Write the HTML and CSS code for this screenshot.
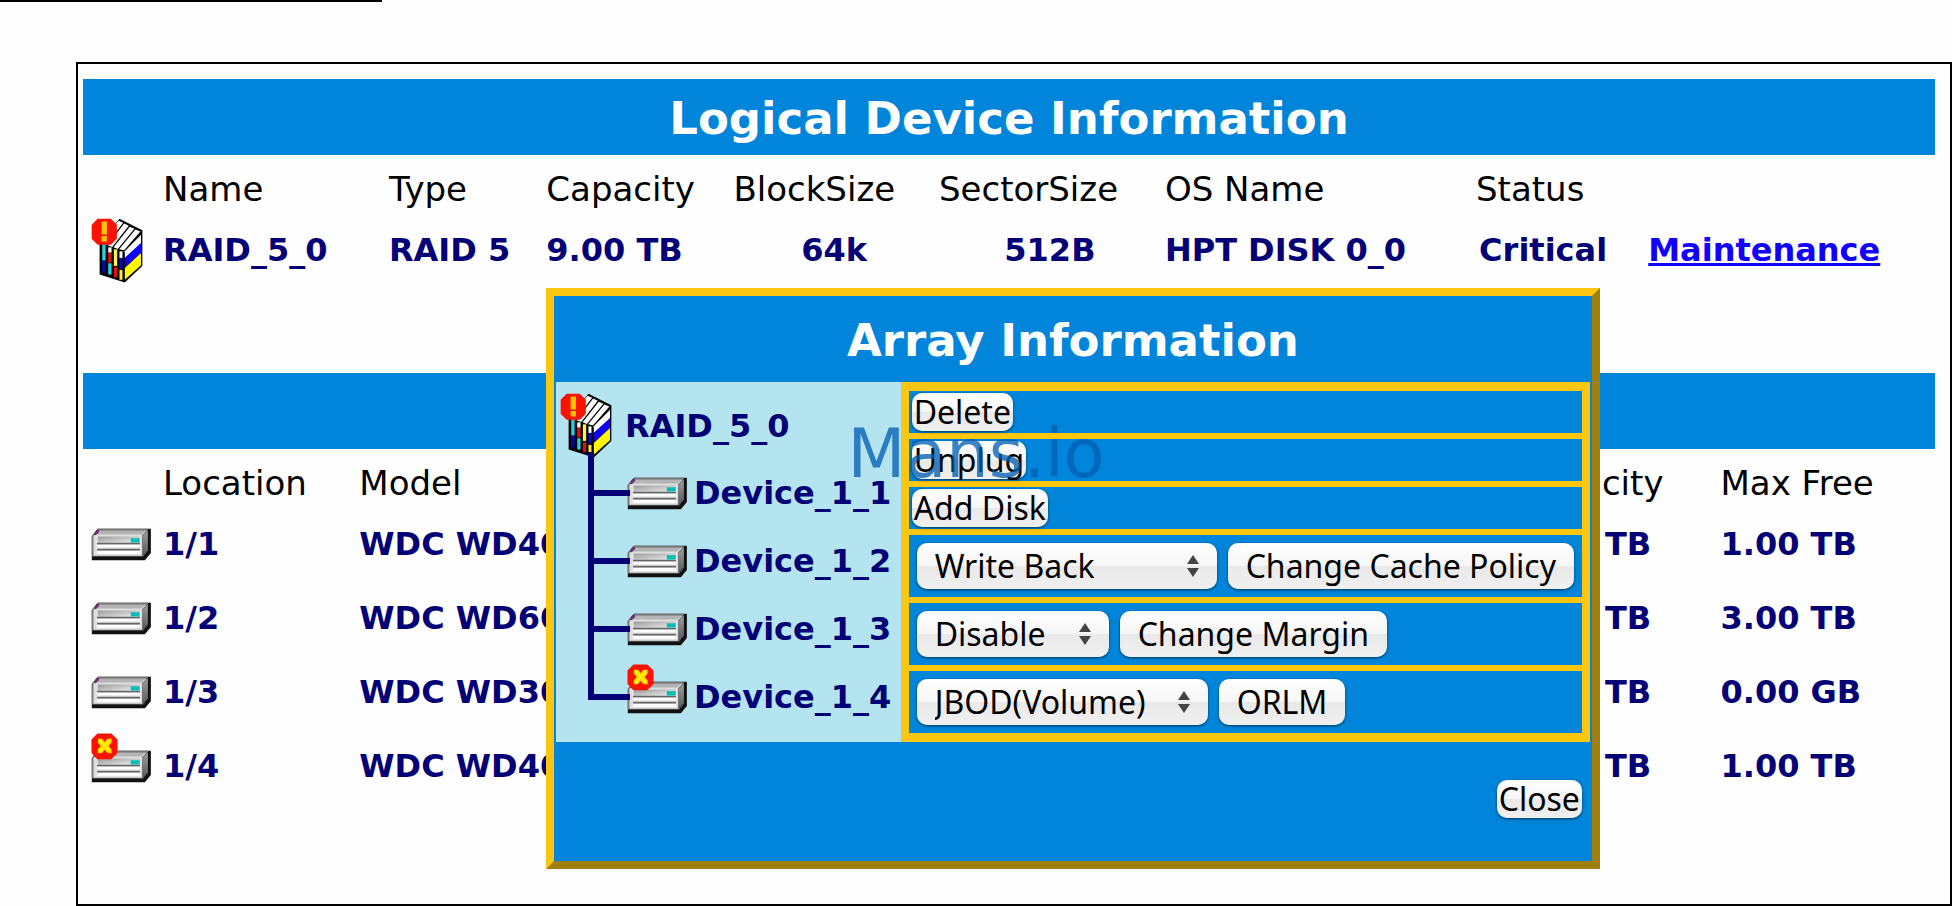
FILE: index.html
```html
<!DOCTYPE html>
<html lang="en">
<head>
<meta charset="utf-8">
<title>Logical Device Information</title>
<link rel="stylesheet" href="styles.css">
</head>
<body>
<svg class="defs" aria-hidden="true">
  <defs>
    <linearGradient id="metal" x1="0" y1="0" x2="1" y2="1">
      <stop offset="0" stop-color="#9a9a9a"/>
      <stop offset="1" stop-color="#f4f4f4"/>
    </linearGradient>
    <linearGradient id="side" x1="0" y1="0" x2="0" y2="1">
      <stop offset="0" stop-color="#a0a0a0"/>
      <stop offset="1" stop-color="#555"/>
    </linearGradient>
  </defs>
  <symbol id="disk" viewBox="32 88 184 100" overflow="visible">
    <path d="M34 112L52 90H213V164L195 186H34Z" fill="#111"/>
    <path d="M34 112L52 90H206L190 112V174H34Z" fill="#777"/>
    <path d="M39 112L54 96H200L186 110V172H39Z" fill="#dedede"/>
    <path d="M188 112L204 95V156L188 176Z" fill="url(#side)"/>
    <path d="M54 97H196L184 108H44Z" fill="#b4b4b4"/>
    <path d="M48 112H184V170H48Z" fill="#e4e4e4"/>
    <path d="M52 114H180V134H52Z" fill="url(#metal)"/>
    <path d="M50 133H180V138H50ZM50 151H180V156H50Z" fill="#666"/>
    <path d="M50 139H180V146H50ZM50 158H180V166H50Z" fill="#fff"/>
    <path d="M152 119H179V132H152Z" fill="#08bdb8"/>
    <path d="M40 108L48 94H56V100L46 110Z" fill="#6b2f6b"/>
  </symbol>
  <symbol id="disk-failed" viewBox="32 88 184 100" overflow="visible">
    <use href="#disk" x="32" y="88" width="184" height="100"/>
    <path d="M51 38H93L112 56V97L93 116H51L33 97V56Z" fill="#fb1200"/>
    <path d="M53 54H65L73 64L81 54H94V66L85 76L94 86V98H82L73 88L64 98H52V86L61 76L52 66Z" fill="#ffd800"/>
    <path d="M57 58L89 94M89 58L57 94" stroke="#fff200" stroke-width="6"/>
  </symbol>
  <symbol id="raid" viewBox="32 22 160 195">
    <path d="M58 96L118 24L187 58V166L134 216L58 192Z" fill="#000"/>
    <path d="M62 97L115 30L129 36L78 103ZM82 104L132 38L146 45L96 109ZM100 110L149 48L163 54L113 115ZM117 116L166 56L181 62L132 119Z" fill="#fff"/>
    <path d="M134 122L183 72V98L134 142Z" fill="#fff"/>
    <path d="M134 142L183 97V126L134 170Z" fill="#1000fa"/>
    <path d="M134 172L183 127V164L134 208Z" fill="#fff600"/>
    <path d="M66 100H76V150H66Z" fill="#25d5df"/>
    <path d="M66 150H76V186H66Z" fill="#0808a8"/>
    <path d="M84 110H94V126H84Z" fill="#fff"/>
    <path d="M84 126H94V156H84Z" fill="#e01010"/>
    <path d="M84 158H94V192H84Z" fill="#25d5df"/>
    <path d="M101 116H111V166H101Z" fill="#fff04a"/>
    <path d="M101 170H111V200H101Z" fill="#e01010"/>
    <path d="M118 122H127V142H118Z" fill="#fff"/>
    <path d="M118 142H127V174H118Z" fill="#0808c0"/>
    <path d="M118 178H127V208H118Z" fill="#ffe83a"/>
    <path d="M52 24H92L110 42V84L92 102H52L34 84V42Z" fill="#fb1200"/>
    <path d="M64 32H80V71H64ZM64 76H80V92H64Z" fill="#ffc400"/>
  </symbol>
  <symbol id="updown" viewBox="0 0 14 24">
    <path d="M7 1L13 10H1ZM7 23L13 14H1Z" fill="#444"/>
  </symbol>
</svg>

<div class="rule"></div>

<main class="frame">
  <section class="devices">
    <h1 class="bar">Logical Device Information</h1>
    <table class="grid logical">
      <colgroup>
        <col class="c-icon"><col class="c-name"><col class="c-type"><col class="c-cap"><col class="c-block"><col class="c-sector"><col class="c-os"><col class="c-status"><col>
      </colgroup>
      <thead>
        <tr><th></th><th>Name</th><th>Type</th><th>Capacity</th><th>BlockSize</th><th>SectorSize</th><th>OS Name</th><th>Status</th><th></th></tr>
      </thead>
      <tbody>
        <tr>
          <td class="icon-cell"><svg class="icon-raid"><use href="#raid"/></svg></td>
          <td>RAID_5_0</td><td>RAID 5</td><td>9.00 TB</td>
          <td class="mid">64k</td><td class="mid">512B</td><td>HPT DISK 0_0</td><td class="mid state">Critical</td>
          <td><a href="#array">Maintenance</a></td>
        </tr>
      </tbody>
    </table>
  </section>

  <section class="devices">
    <div class="bar"></div>
    <table class="grid physical">
      <colgroup>
        <col class="c-icon"><col class="c-loc"><col class="c-model"><col class="c-size"><col>
      </colgroup>
      <thead>
        <tr><th></th><th>Location</th><th>Model</th><th>Capacity</th><th>Max Free</th></tr>
      </thead>
      <tbody>
        <tr><td class="icon-cell"><svg class="icon-disk"><use href="#disk"/></svg></td><td>1/1</td><td>WDC WD40</td><td>4.00 TB</td><td>1.00 TB</td></tr>
        <tr><td class="icon-cell"><svg class="icon-disk"><use href="#disk"/></svg></td><td>1/2</td><td>WDC WD60</td><td>6.00 TB</td><td>3.00 TB</td></tr>
        <tr><td class="icon-cell"><svg class="icon-disk"><use href="#disk"/></svg></td><td>1/3</td><td>WDC WD30</td><td>3.00 TB</td><td>0.00 GB</td></tr>
        <tr><td class="icon-cell"><svg class="icon-disk"><use href="#disk-failed"/></svg></td><td>1/4</td><td>WDC WD40</td><td>4.00 TB</td><td>1.00 TB</td></tr>
      </tbody>
    </table>
  </section>

  <section class="dialog" id="array" role="dialog" aria-labelledby="array-title">
    <h2 class="dialog-title" id="array-title">Array Information</h2>
    <div class="dialog-body">
      <div class="tree">
        <div class="tree-root"><svg class="icon-raid"><use href="#raid"/></svg><span>RAID_5_0</span></div>
        <ul class="tree-list">
          <li><svg class="icon-disk"><use href="#disk"/></svg><span>Device_1_1</span></li>
          <li><svg class="icon-disk"><use href="#disk"/></svg><span>Device_1_2</span></li>
          <li><svg class="icon-disk"><use href="#disk"/></svg><span>Device_1_3</span></li>
          <li><svg class="icon-disk"><use href="#disk-failed"/></svg><span>Device_1_4</span></li>
        </ul>
      </div>
      <div class="actions">
        <div class="action slim"><button type="button" class="btn small">Delete</button></div>
        <div class="action slim"><button type="button" class="btn small">Unplug</button></div>
        <div class="action slim"><button type="button" class="btn small">Add Disk</button></div>
        <div class="action">
          <span class="pick pick-cache"><select class="btn" aria-label="Cache policy"><option>Write Back</option></select><svg class="arrows"><use href="#updown"/></svg></span>
          <button type="button" class="btn">Change Cache Policy</button>
        </div>
        <div class="action">
          <span class="pick pick-margin"><select class="btn" aria-label="Margin"><option>Disable</option></select><svg class="arrows"><use href="#updown"/></svg></span>
          <button type="button" class="btn">Change Margin</button>
        </div>
        <div class="action">
          <span class="pick pick-level"><select class="btn" aria-label="Array level"><option>JBOD(Volume)</option></select><svg class="arrows"><use href="#updown"/></svg></span>
          <button type="button" class="btn">ORLM</button>
        </div>
      </div>
    </div>
    <div class="dialog-foot"><button type="button" class="btn small">Close</button></div>
  </section>
</main>

<div class="watermark">Mans.io</div>
</body>
</html>
```

FILE: styles.css
```css
* { box-sizing: border-box; }

body {
  position: relative;
  margin: 0;
  min-height: 100vh;
  display: flex;
  flex-direction: column;
  background: #fefefe;
  color: #000;
  font-family: Verdana, "DejaVu Sans", sans-serif;
}

.defs {
  position: absolute;
  width: 0;
  height: 0;
}

.rule {
  width: 382px;
  height: 2px;
  margin-bottom: 60px;
  background: #000;
}

.frame {
  position: relative;
  flex: 1;
  margin-left: 76px;
  padding: 15px 15px 0 5px;
  border: 2px solid #000;
}

.devices + .devices { margin-top: 88px; }

.bar {
  display: flex;
  align-items: center;
  justify-content: center;
  height: 76px;
  margin: 0;
  padding-top: 3px;
  background: #0085da;
  color: #fff;
  font-size: 45px;
  font-weight: bold;
}

.grid {
  width: 100%;
  table-layout: fixed;
  border-collapse: collapse;
  white-space: nowrap;
}

.grid th {
  height: 58px;
  padding: 10px 0 0;
  font-size: 34px;
  line-height: 40px;
  font-weight: normal;
  text-align: left;
}

.grid td {
  height: 74px;
  padding: 0;
  color: #050075;
  font-size: 32px;
  line-height: 40px;
  font-weight: bold;
}

.grid .mid {
  padding-right: 4px;
  text-align: center;
}

.grid .state { padding-right: 38px; }

.grid .icon-cell { padding-left: 8px; }

.grid a { color: #1200ff; }

.devices + .devices { margin-top: 86px; }

.c-icon { width: 80px; }
.c-name { width: 12.2%; }
.c-type { width: 8.5%; }
.c-cap { width: 10.1%; }
.c-block { width: 11.1%; }
.c-sector { width: 12.2%; }
.c-os { width: 16.8%; }
.c-status { width: 9.3%; }
.c-loc { width: 10.6%; }
.c-model { width: 62.4%; }
.c-size { width: 11.1%; }

.icon-raid {
  display: block;
  flex: none;
  width: 53px;
  height: 65px;
}

.icon-disk {
  display: block;
  flex: none;
  width: 61px;
  height: 33px;
  overflow: visible;
}

.dialog {
  position: absolute;
  top: 224px;
  left: 25%;
  width: 56.3%;
  border: 8px solid;
  border-color: #fac60f #a07f0c #a07f0c #fac60f;
  background: #0085da;
}

.dialog-title {
  display: flex;
  align-items: center;
  justify-content: center;
  height: 86px;
  margin: 0;
  padding-top: 2px;
  color: #fff;
  font-size: 45px;
}

.dialog-body {
  display: grid;
  grid-template-columns: 1fr 2fr;
  padding: 0 2px;
}

.tree {
  background: #b4e4f0;
  color: #050075;
  font-size: 32px;
  font-weight: bold;
  white-space: nowrap;
}

.tree-root {
  display: flex;
  align-items: center;
  gap: 12px;
  height: 77px;
  padding: 10px 0 0 4px;
}

.tree-list {
  margin: 0;
  padding: 0;
  list-style: none;
}

.tree-list li {
  position: relative;
  display: flex;
  align-items: center;
  gap: 6px;
  height: 68px;
  padding-left: 71px;
}

.tree-list li::before {
  content: "";
  position: absolute;
  left: 32px;
  bottom: 31px;
  width: 36px;
  height: 74px;
  border-left: 6px solid #050075;
  border-bottom: 6px solid #050075;
}

.tree-list li:first-child::before { height: 38px; }

.actions {
  display: flex;
  flex-direction: column;
  gap: 6px;
  padding: 9px 8px;
  background: #fac60f;
}

.action {
  display: flex;
  align-items: center;
  gap: 11px;
  height: 62px;
  padding-left: 8px;
  background: #0085da;
}

.action.slim {
  height: 42px;
  padding-left: 3px;
}

.btn {
  height: 46px;
  padding: 0 18px;
  border: 0;
  border-radius: 10px;
  background: linear-gradient(#fff 0%, #f6f6f6 49%, #e9e9e9 51%, #f0f0f0 100%);
  box-shadow: 0 1px 3px #00000099;
  color: #000;
  font-family: "Noto Sans", "Open Sans", sans-serif;
  font-size: 32px;
  line-height: 44px;
  white-space: nowrap;
}

.btn.small {
  height: 38px;
  padding: 0 2px;
  line-height: 36px;
}

.pick {
  position: relative;
  display: flex;
}

.pick select {
  width: 100%;
  appearance: none;
}

.pick-cache { width: 300px; }
.pick-margin { width: 192px; }
.pick-level { width: 291px; }

.arrows {
  position: absolute;
  top: 11px;
  right: 17px;
  width: 14px;
  height: 24px;
  pointer-events: none;
}

.dialog-foot {
  display: flex;
  justify-content: flex-end;
  padding: 38px 10px 43px;
}

.watermark {
  position: absolute;
  top: 416px;
  left: 0;
  right: 0;
  color: rgba(0, 94, 180, 0.77);
  font-size: 67px;
  line-height: 76px;
  text-align: center;
  pointer-events: none;
}
```
